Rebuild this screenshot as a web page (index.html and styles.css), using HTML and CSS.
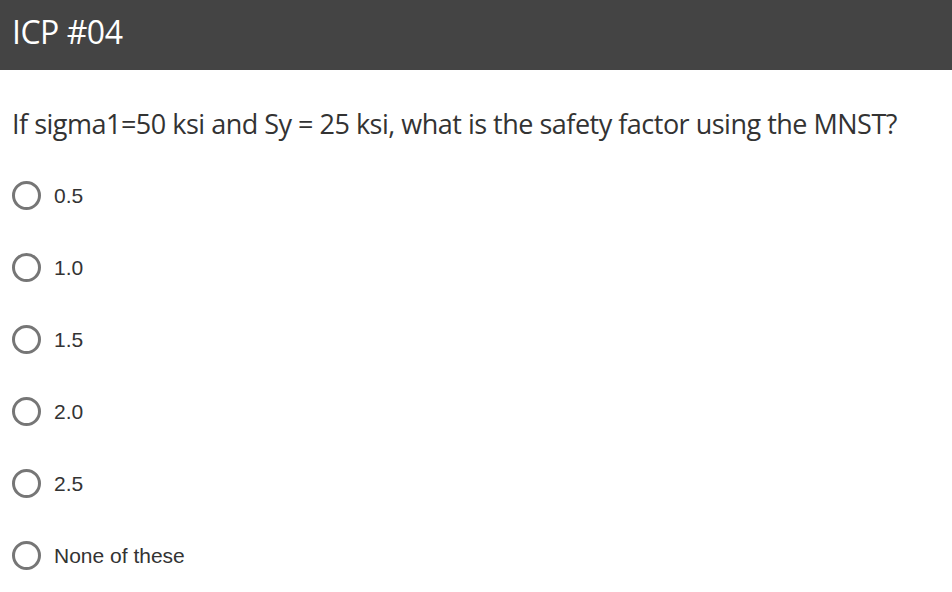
FILE: index.html
```html
<!DOCTYPE html>
<html>
<head>
<meta charset="utf-8">
<link rel="stylesheet" href="styles.css">
</head>
<body>
<header class="bar"><h1 class="title">ICP #04</h1></header>
<main class="content">
  <p class="question">If sigma1=50 ksi and Sy = 25 ksi, what is the safety factor using the MNST?</p>
  <ul class="options">
    <li class="option"><span class="radio"></span><span class="label">0.5</span></li>
    <li class="option"><span class="radio"></span><span class="label">1.0</span></li>
    <li class="option"><span class="radio"></span><span class="label">1.5</span></li>
    <li class="option"><span class="radio"></span><span class="label">2.0</span></li>
    <li class="option"><span class="radio"></span><span class="label">2.5</span></li>
    <li class="option"><span class="radio"></span><span class="label">None of these</span></li>
  </ul>
</main>
</body>
</html>
```
FILE: styles.css
```css
* { box-sizing: border-box; }
body { margin: 0; background: #fff; font-family: "Open Sans", sans-serif; }
.bar { background: #444444; height: 70px; display: flex; align-items: center; padding: 0 0 7px 12px; }
.title { margin: 0; color: #fff; font-weight: 400; font-size: 32px; letter-spacing: -0.5px; line-height: 1; }
.content { padding: 0 12px; }
.question { margin: 36px 0 0; color: #333; font-size: 27px; line-height: 36px; letter-spacing: -0.5px; }
.options { list-style: none; margin: 39px 0 0; padding: 0; display: flex; flex-direction: column; gap: 43px; }
.option { display: flex; align-items: center; height: 29px; gap: 13px; }
.radio { width: 29px; height: 29px; border: 3px solid #767676; border-radius: 50%; flex: none; }
.label { font-family: "Liberation Sans", Arial, sans-serif; font-size: 21px; color: #333; }
```
